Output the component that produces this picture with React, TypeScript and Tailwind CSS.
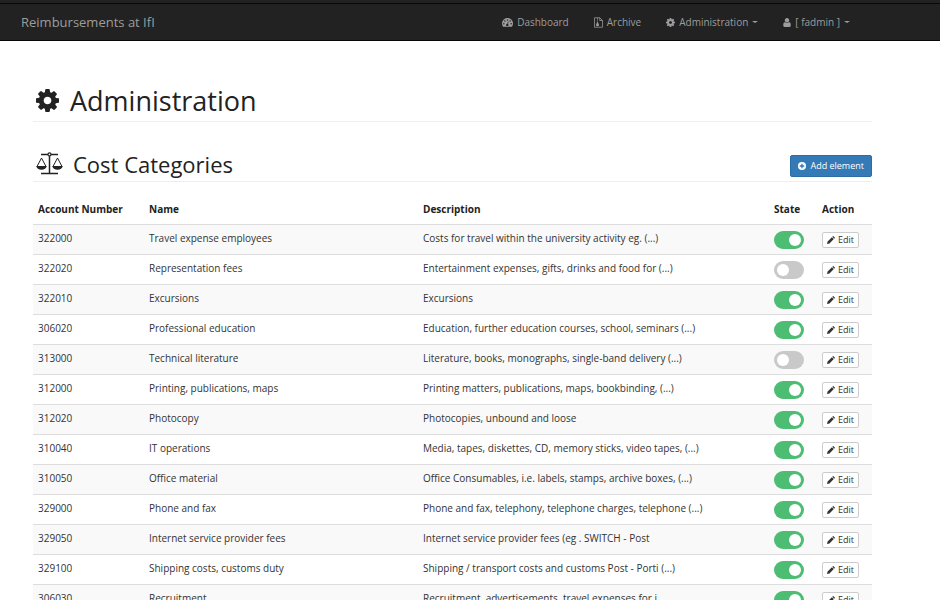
import React from "react";

type IconProps = { className?: string };

const GEAR =
  "M1024 896q0-106-75-181t-181-75-181 75-75 181 75 181 181 75 181-75 75-181zm512-109v222q0 12-8 23t-20 13l-185 28q-19 54-39 91 35 50 107 138 10 12 10 25t-9 23q-27 37-99 108t-94 71q-12 0-26-9l-138-108q-44 23-91 38-16 136-29 186-7 28-36 28h-222q-14 0-24.5-8.5t-11.5-21.5l-28-184q-49-16-90-37l-141 107q-10 9-25 9-14 0-25-11-126-114-165-168-7-10-7-23 0-12 8-23 15-21 51-66.5t54-70.5q-27-50-41-99l-183-27q-13-2-21-12.5t-8-23.5v-222q0-12 8-23t19-13l186-28q14-46 39-92-40-57-107-138-10-12-10-24 0-10 9-23 26-36 98.5-107.5t94.5-71.5q13 0 26 10l138 107q44-23 91-38 16-136 29-186 7-28 36-28h222q14 0 24.5 8.5t11.5 21.5l28 184q49 16 90 37l142-107q9-9 24-9 13 0 25 10 129 119 165 170 7 8 7 22 0 12-8 23-15 21-51 66.5t-54 70.5q26 50 41 98l183 28q13 2 21 12.5t8 23.5z";
const USER =
  "M1280 1399q0 109-62.5 187t-150.5 78h-854q-88 0-150.5-78t-62.5-187q0-85 8.5-160.5t31.5-152 58.5-131 94-89 134.5-34.5q131 128 313 128t313-128q76 0 134.5 34.5t94 89 58.5 131 31.5 152 8.5 160.5zm-256-887q0 159-112.5 271.5t-271.5 112.5-271.5-112.5-112.5-271.5 112.5-271.5 271.5-112.5 271.5 112.5 112.5 271.5z";

function Gear({ className }: IconProps) {
  return (
    <svg viewBox="0 128 1536 1536" fill="currentColor" className={className} aria-hidden="true">
      <path d={GEAR} />
    </svg>
  );
}

function User({ className }: IconProps) {
  return (
    <svg viewBox="0 128 1280 1536" fill="currentColor" className={className} aria-hidden="true">
      <path d={USER} />
    </svg>
  );
}

function Gauge({ className }: IconProps) {
  return (
    <svg viewBox="0 0 22 18" className={className} aria-hidden="true">
      <path d="M2.2 17.5A11 11 0 1 1 19.8 17.5Z" fill="currentColor" />
      <g fill="#222">
        <circle cx="3.6" cy="11.4" r="1.5" />
        <circle cx="5.8" cy="6.2" r="1.5" />
        <circle cx="11" cy="4" r="1.5" />
        <circle cx="16.2" cy="6.2" r="1.5" />
        <circle cx="18.4" cy="11.4" r="1.5" />
        <circle cx="10.6" cy="13.8" r="2.4" />
      </g>
      <path d="M10.8 13.5L12.6 7" stroke="#222" strokeWidth="1.3" />
    </svg>
  );
}

function ZipFile({ className }: IconProps) {
  return (
    <svg viewBox="0 0 18 21" fill="none" stroke="currentColor" strokeWidth="1.5" className={className} aria-hidden="true">
      <path d="M1 1H11.5L17 6.5V20H1Z" />
      <path d="M11.5 1V6.5H17" />
      <path d="M7 2V10" strokeWidth="2" strokeDasharray="1.5 1" />
      <path d="M6 10H8L10 15.5A2.6 2.2 0 0 1 4 15.5Z" fill="currentColor" stroke="none" />
    </svg>
  );
}

function Scales({ className }: IconProps) {
  return (
    <svg viewBox="0 0 27 23" fill="none" stroke="currentColor" strokeWidth="1" className={className} aria-hidden="true">
      <path d="M5 2.5H12M15 2.5H22M5 21.5H22" strokeWidth="1.4" />
      <circle cx="13.5" cy="2.4" r="1.5" strokeWidth="1.2" />
      <path d="M13.5 4V21.5" strokeWidth="1.5" />
      <path d="M1 14.5L5.5 6L10 14.5M17 14.5L21.5 6L26 14.5" />
      <path d="M0.3 14H10.7C10.4 16.4 8.3 17.7 5.5 17.7S0.6 16.4 0.3 14ZM16.3 14H26.7C26.4 16.4 24.3 17.7 21.5 17.7S16.6 16.4 16.3 14Z" fill="currentColor" stroke="none" />
    </svg>
  );
}

function PlusCircle({ className }: IconProps) {
  return (
    <svg viewBox="0 0 16 16" className={className} aria-hidden="true">
      <circle cx="8" cy="8" r="8" fill="currentColor" />
      <path d="M8 3.5V12.5M3.5 8H12.5" stroke="#337ab7" strokeWidth="2.6" />
    </svg>
  );
}

function Pencil({ className }: IconProps) {
  return (
    <svg viewBox="0 0 16 16" fill="currentColor" className={className} aria-hidden="true">
      <path d="M0 16L1.2 11L9.8 2.4L13.6 6.2L5 14.8ZM10.7 1.5L11.8 0.4Q12.4 -0.1 13 0.4L15.6 3Q16.1 3.6 15.6 4.2L14.5 5.3Z" />
    </svg>
  );
}

function Caret() {
  return <span className="border-x-3 border-t-2 border-x-transparent border-t-current" />;
}

type Row = { account: string; name: string; description: string; active: boolean };

const rows: Row[] = [
  { account: "322000", name: "Travel expense employees", description: "Costs for travel within the university activity eg. (...)", active: true },
  { account: "322020", name: "Representation fees", description: "Entertainment expenses, gifts, drinks and food for (...)", active: false },
  { account: "322010", name: "Excursions", description: "Excursions", active: true },
  { account: "306020", name: "Professional education", description: "Education, further education courses, school, seminars (...)", active: true },
  { account: "313000", name: "Technical literature", description: "Literature, books, monographs, single-band delivery (...)", active: false },
  { account: "312000", name: "Printing, publications, maps", description: "Printing matters, publications, maps, bookbinding, (...)", active: true },
  { account: "312020", name: "Photocopy", description: "Photocopies, unbound and loose", active: true },
  { account: "310040", name: "IT operations", description: "Media, tapes, diskettes, CD, memory sticks, video tapes, (...)", active: true },
  { account: "310050", name: "Office material", description: "Office Consumables, i.e. labels, stamps, archive boxes, (...)", active: true },
  { account: "329000", name: "Phone and fax", description: "Phone and fax, telephony, telephone charges, telephone (...)", active: true },
  { account: "329050", name: "Internet service provider fees", description: "Internet service provider fees (eg . SWITCH - Post", active: true },
  { account: "329100", name: "Shipping costs, customs duty", description: "Shipping / transport costs and customs Post - Porti (...)", active: true },
  { account: "306030", name: "Recruitment", description: "Recruitment, advertisements, travel expenses for j", active: true },
];

function Toggle({ label, active }: { label: string; active: boolean }) {
  return (
    <label className="flex w-[30px] cursor-pointer">
      <input type="checkbox" defaultChecked={active} aria-label={label} className="peer sr-only" />
      <span className="flex h-[18px] w-[30px] items-center rounded-full bg-[#c9c9c9] px-[3px] peer-checked:justify-end peer-checked:bg-[#4dbd74]">
        <span className="size-3 rounded-full bg-white" />
      </span>
    </label>
  );
}

export default function App() {
  return (
    <div className="h-screen overflow-hidden bg-white font-['Open_Sans',sans-serif] text-[10px] leading-4 text-[#333]">
      <header className="border-b border-[#080808] bg-[#222] text-[#9d9d9d]">
        <div className="h-1 border-b border-[#080808]" />
        <nav className="flex h-9 items-center justify-between pr-[90px] pl-[21px]">
          <a href="#home" className="text-[13px]">Reimbursements at IfI</a>
          <div className="flex items-center gap-[25px]">
            <a href="#dashboard" className="flex items-center gap-1">
              <Gauge className="h-[9px] w-[11px]" />
              Dashboard
            </a>
            <a href="#archive" className="flex items-center gap-1">
              <ZipFile className="h-[11px] w-[9px]" />
              Archive
            </a>
            <button type="button" className="flex items-center gap-1">
              <Gear className="size-[9px]" />
              Administration
              <Caret />
            </button>
            <button type="button" className="flex items-center gap-1">
              <User className="h-[9px] w-2" />
              [ fadmin ]
              <Caret />
            </button>
          </div>
        </nav>
      </header>

      <main className="mr-[68px] ml-[33px] pt-[39px] text-[#222]">
        <h1 className="flex h-[42px] items-center gap-[11px] border-b border-[#eee] pl-[3px] text-[27px] leading-9">
          <Gear className="size-[23px]" />
          Administration
        </h1>

        <div className="mt-6 flex h-9 items-center justify-between border-b border-[#eee] pl-[3px]">
          <h2 className="flex items-center gap-[10px] text-[22px] leading-8">
            <Scales className="h-[23px] w-[27px]" />
            Cost Categories
          </h2>
          <button type="button" className="mt-1 flex h-[22px] items-center gap-1 rounded-xs border border-[#2e6da4] bg-[#337ab7] px-[7px] text-[9px] text-white">
            <PlusCircle className="size-2" />
            Add element
          </button>
        </div>

        <table className="mt-[14px] w-full table-fixed border-separate border-spacing-0 text-left">
          <colgroup>
            <col className="w-[111px]" />
            <col className="w-[274px]" />
            <col />
            <col className="w-[48px]" />
            <col className="w-[55px]" />
          </colgroup>
          <thead>
            <tr className="h-7 *:pb-0.5 *:pl-[5px]">
              <th>Account Number</th>
              <th>Name</th>
              <th>Description</th>
              <th>State</th>
              <th>Action</th>
            </tr>
          </thead>
          <tbody className="text-[#333]">
            {rows.map((row) => (
              <tr key={row.account} className="h-[30px] odd:bg-[#f9f9f9] *:border-t *:border-[#ddd] *:pl-[5px]">
                <td className="pb-1">{row.account}</td>
                <td className="pb-1">{row.name}</td>
                <td className="pb-1">{row.description}</td>
                <td>
                  <Toggle label={"State of " + row.name} active={row.active} />
                </td>
                <td>
                  <button type="button" className="flex h-4 items-center gap-[3px] rounded-xs border border-[#ccc] bg-white px-1 text-[9px] leading-3">
                    <Pencil className="size-2" />
                    Edit
                  </button>
                </td>
              </tr>
            ))}
          </tbody>
        </table>
      </main>
    </div>
  );
}
